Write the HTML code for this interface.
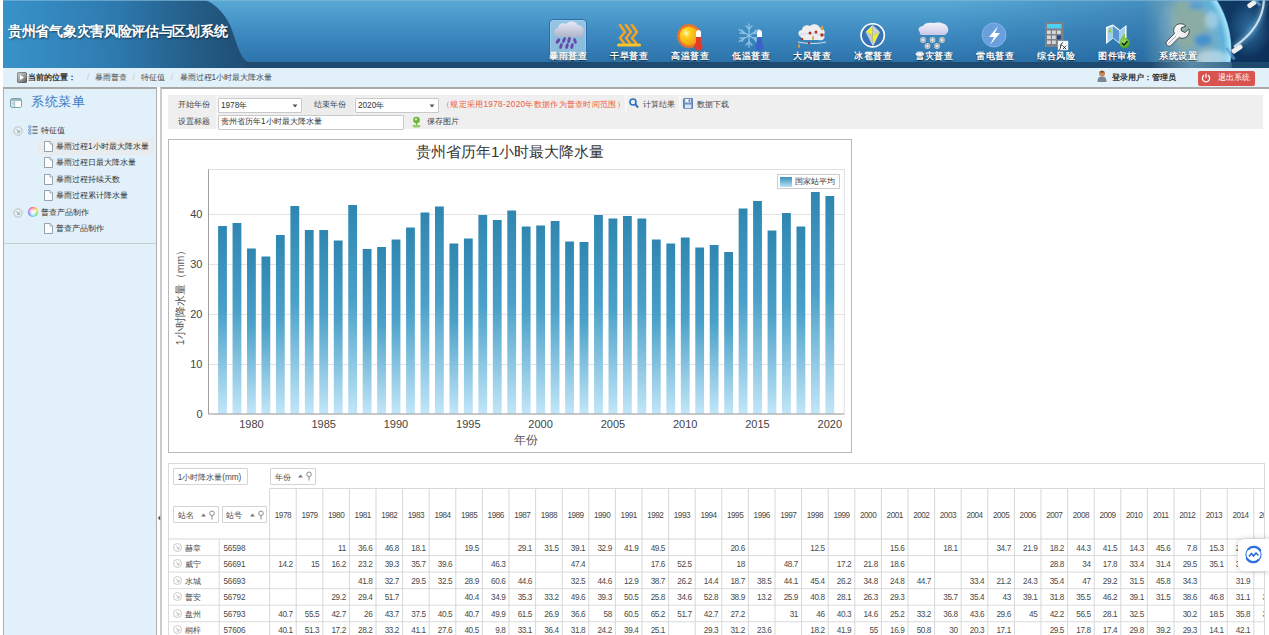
<!DOCTYPE html>
<html><head><meta charset="utf-8">
<style>
*{margin:0;padding:0;box-sizing:border-box}
html,body{width:1269px;height:635px;overflow:hidden}
body{position:relative;background:#fff;font-family:"Liberation Sans",sans-serif;color:#333}
.a{position:absolute}
#title{left:8px;top:21.5px;font-size:14px;letter-spacing:-0.3px;font-weight:bold;color:#fff;text-shadow:1px 1px 2px rgba(0,0,0,.55);white-space:nowrap;line-height:18px}
.nl{position:absolute;top:50px;width:51px;font-size:9px;letter-spacing:0.6px;text-indent:0.6px;font-weight:bold;color:#fff;text-shadow:0 1px 1.5px rgba(0,0,0,.75);white-space:nowrap;text-align:center;line-height:12px}
#bc{left:3px;top:68px;width:1266px;height:19px;background:#e2f0f9}
#side{left:3px;top:87px;width:154px;height:560px;background:#e2f0f9;border:1px solid #b0b0b0;border-top:2px solid #a9a9a9}
#main{left:160px;top:87px;width:1110px;height:560px;background:#fff;border-left:2px solid #cbcbcb;border-top:2px solid #a9a9a9}
.t9{font-size:8.2px;white-space:nowrap;line-height:12px}
.tr{color:#333}
.tl{color:#444}
.tv{color:#333}
.fi{position:absolute;left:44px;width:8.5px;height:10.5px;background:linear-gradient(135deg,#fff 0%,#e8f0f8 100%);border:1px solid #8a9aa8;border-radius:0 2px 0 0}
#tb{left:168px;top:95px;width:1095px;height:34px;background:#efefef}
.sel{position:absolute;background:#fff;border:1px solid #c9c9c9;border-radius:1px}
#chart{left:168px;top:139px;width:684px;height:314px;border:1px solid #b8b8b8;background:#fff}
.yl{position:absolute;left:0;width:33.5px;text-align:right;font-size:11px;color:#444;line-height:14px}
.xl{position:absolute;top:276.5px;width:40px;text-align:center;font-size:11px;color:#444;line-height:14px}
#tbl{left:168px;top:463px;width:1097px;height:200px;border:1px solid #d9d9d9;overflow:hidden;background:#fff}
.yc{position:absolute;font-size:8.2px;color:#4a4a4a;display:flex;align-items:center;justify-content:center;letter-spacing:-0.5px}
.dc{position:absolute;font-size:8.2px;color:#4a4a4a;line-height:16.5px;text-align:right;padding-right:3.6px;letter-spacing:-0.4px;white-space:nowrap}
.rn{position:absolute;font-size:8.2px;color:#4a4a4a;line-height:16.5px;white-space:nowrap}
.rn.sid{letter-spacing:-0.2px}
.pill{position:absolute;border:1px solid #d4d4d4;background:#fff;border-radius:1px}
.pb{position:absolute;border:1px solid #d0d0d0;background:#fff;font-size:9px;color:#555;white-space:nowrap;line-height:15px}
</style></head><body>
<svg class="a" style="left:0;top:0" width="1269" height="68">
<defs>
<linearGradient id="hl" x1="3" y1="0" x2="250" y2="0" gradientUnits="userSpaceOnUse">
 <stop offset="0" stop-color="#3893cb"/><stop offset="0.45" stop-color="#2e7aaf"/><stop offset="0.8" stop-color="#235b85"/><stop offset="1" stop-color="#1f4d72"/>
</linearGradient>
<linearGradient id="hr" x1="0" y1="0" x2="0" y2="1">
 <stop offset="0" stop-color="#58a9d5"/><stop offset="0.5" stop-color="#3f8cc2"/><stop offset="1" stop-color="#2c73ab"/>
</linearGradient>
<radialGradient id="earth" cx="0.5" cy="0.5" r="0.5">
 <stop offset="0" stop-color="#6c9cb4"/><stop offset="0.75" stop-color="#7dabbd"/><stop offset="0.92" stop-color="#5fb2dc"/><stop offset="0.985" stop-color="#a6e2f6"/><stop offset="1" stop-color="#5ab4e4"/>
</radialGradient>
<radialGradient id="earthfade" cx="1" cy="0.5" r="1">
 <stop offset="0.55" stop-color="#2f7ab3" stop-opacity="0"/><stop offset="1" stop-color="#2f7ab3" stop-opacity="1"/>
</radialGradient>
<linearGradient id="space" x1="0" y1="0" x2="1" y2="0">
 <stop offset="0" stop-color="#12406c"/><stop offset="1" stop-color="#0b2f58"/>
</linearGradient>
<linearGradient id="darkr" x1="0" y1="0" x2="1" y2="0"><stop offset="0" stop-color="#1f5e92" stop-opacity="0"/><stop offset="1" stop-color="#1f5e92" stop-opacity="0.55"/></linearGradient>
<linearGradient id="emg" x1="1142" y1="0" x2="1180" y2="0" gradientUnits="userSpaceOnUse"><stop offset="0" stop-color="#fff" stop-opacity="0"/><stop offset="1" stop-color="#fff" stop-opacity="1"/></linearGradient>
<mask id="emask" maskUnits="userSpaceOnUse" x="0" y="0" width="1269" height="68"><rect x="0" y="0" width="1269" height="68" fill="url(#emg)"/></mask>
<filter id="eblur" x="-20%" y="-20%" width="140%" height="140%"><feGaussianBlur stdDeviation="2"/></filter>
<radialGradient id="glow" cx="0.5" cy="0.5" r="0.5"><stop offset="0" stop-color="#4f9fd8" stop-opacity="0.55"/><stop offset="1" stop-color="#4f9fd8" stop-opacity="0"/></radialGradient>
<linearGradient id="stripe" x1="0" y1="0" x2="1" y2="0"><stop offset="0" stop-color="#8cc4dc" stop-opacity="0"/><stop offset="0.5" stop-color="#9ccbe0" stop-opacity="0.45"/><stop offset="1" stop-color="#8cc4dc" stop-opacity="0.2"/></linearGradient>
</defs>
<rect x="0" y="0" width="1269" height="68" fill="url(#hl)"/>
<path d="M206 0 C222 8 230 22 234 36 C238 48 242 60 248 62 L1269 62 L1269 0 Z" fill="url(#hr)"/>
<rect x="950" y="0" width="319" height="62" fill="url(#darkr)"/>
<rect x="1190" y="0" width="79" height="68" fill="url(#space)"/>
<g mask="url(#emask)">
<circle cx="1138" cy="50" r="93.5" fill="url(#earth)"/>
<g filter="url(#eblur)"><path d="M1172 4 C1186 -2 1204 6 1207 18 C1209 28 1201 33 1196 42 C1191 50 1181 52 1176 42 C1172 32 1168 15 1172 4 Z" fill="#8fae9c" opacity="0.75"/>
<ellipse cx="1203" cy="40" rx="9" ry="6" fill="#3d8dd2" opacity="0.85"/>
<ellipse cx="1196" cy="6" rx="8" ry="4" fill="#4a98d8" opacity="0.7"/>
<ellipse cx="1212" cy="20" rx="7" ry="9" fill="#d6ecf5" opacity="0.45"/>
<ellipse cx="1212" cy="58" rx="16" ry="8" fill="#e6f4fa" opacity="0.5"/>
<ellipse cx="1168" cy="25" rx="10" ry="18" fill="#a9c6cf" opacity="0.35"/>
</g></g>
<ellipse cx="1250" cy="28" rx="22" ry="30" fill="url(#glow)"/>
<path d="M1264 0 C1263 18 1253 34 1234 47" stroke="#9fe0ff" stroke-width="6" fill="none" opacity="0.35" filter="url(#eblur)"/>
<path d="M1264 0 C1263 18 1253 34 1234 47" stroke="#e6f8ff" stroke-width="2.2" fill="none" opacity="0.8"/>
<g transform="translate(1252,4) rotate(-35)"><rect x="-5" y="-2.5" width="10" height="5" rx="2" fill="#f0f0f0"/><rect x="4" y="-6" width="3" height="12" fill="#5c9fd4" opacity="0.8"/></g>
<g transform="translate(1237,49) rotate(-35)"><rect x="-6" y="-2.5" width="12" height="5" rx="2" fill="#eeeeee"/><rect x="-9.5" y="-7" width="3" height="14" fill="#5c9fd4" opacity="0.7"/></g>
<rect x="246" y="62" width="1023" height="6" fill="#1f4b70" opacity="0.92"/>
<rect x="1150" y="62" width="82" height="6" fill="url(#stripe)"/>
<rect x="0" y="0" width="1269" height="1" fill="#7fb5d6" opacity="0.7"/>
<rect x="0" y="0" width="3" height="68" fill="#fff"/>
</svg>
<div id="title" class="a">贵州省气象灾害风险评估与区划系统</div>

<div class="a" style="left:549px;top:19px;width:38px;height:42px;border:1px solid #2c6cab;border-radius:4px;background:rgba(200,232,246,0.58);box-shadow:inset 0 0 0 0.5px rgba(255,255,255,0.35)"></div>
<svg class="a" style="left:0;top:0" width="1269" height="68">
<defs>
<radialGradient id="sun" cx="0.35" cy="0.35" r="0.7"><stop offset="0" stop-color="#fffbd0"/><stop offset="0.3" stop-color="#ffd21c"/><stop offset="1" stop-color="#f39a14"/></radialGradient>
<linearGradient id="cld" x1="0" y1="0" x2="0" y2="1"><stop offset="0" stop-color="#e6e9f6"/><stop offset="1" stop-color="#aeb3c9"/></linearGradient>
<linearGradient id="cld2" x1="0" y1="0" x2="0" y2="1"><stop offset="0" stop-color="#f4f4fb"/><stop offset="1" stop-color="#c9c8e6"/></linearGradient>
<radialGradient id="gchk" cx="0.4" cy="0.35" r="0.7"><stop offset="0" stop-color="#9ee06a"/><stop offset="1" stop-color="#3a9a1c"/></radialGradient>
<linearGradient id="wr" x1="0" y1="0" x2="1" y2="1"><stop offset="0" stop-color="#ffffff"/><stop offset="0.6" stop-color="#eef0f3"/><stop offset="1" stop-color="#c4c9d0"/></linearGradient>
</defs>
<!-- rain -->
<g>
<path d="M556 35 C553 33 554 28 558 28 C558 24 563 22 566 24 C569 20 576 21 578 25 C582 25 585 29 583 33 C584 37 580 38 577 37 L560 37 C557 37 556 36 556 35 Z" fill="url(#cld)"/>
<g fill="#6a48aa"><ellipse cx="558" cy="41" rx="1.6" ry="3" transform="rotate(35 558 41)"/><ellipse cx="564" cy="40" rx="1.5" ry="3.2" transform="rotate(20 564 40)"/><ellipse cx="569" cy="40" rx="1.5" ry="3.2" transform="rotate(15 569 40)"/><ellipse cx="575" cy="41" rx="1.5" ry="3" transform="rotate(-20 575 41)"/><ellipse cx="561" cy="46" rx="1.5" ry="3" transform="rotate(20 561 46)"/><ellipse cx="567" cy="46" rx="1.5" ry="3" transform="rotate(15 567 46)"/><ellipse cx="572" cy="46" rx="1.5" ry="3" transform="rotate(15 572 46)"/></g>
</g>
<!-- drought -->
<g fill="none" stroke="#f7a21f" stroke-width="2.6" stroke-linejoin="round" stroke-linecap="round">
<path d="M620 25 L625 32 L620 38 L624 43"/><path d="M626 25 L631 32 L626 38 L630 43"/><path d="M632 25 L637 32 L632 38 L636 43"/>
</g>
<rect x="617" y="43.5" width="24" height="3" rx="1.5" fill="#f8c32b"/>
<!-- sun -->
<g>
<circle cx="689" cy="36" r="11.5" fill="#e8742a" stroke="#e8742a" stroke-width="1.5" stroke-dasharray="2 1.5"/>
<circle cx="689" cy="36" r="9.5" fill="url(#sun)"/>
<rect x="696" y="30" width="5" height="14" rx="2.5" fill="#fff"/>
<rect x="696" y="37" width="5" height="8" fill="#e03a2a"/>
<circle cx="698.5" cy="46.5" r="4" fill="#e03a2a"/>
</g>
<!-- snow -->
<g stroke="#8fc3e6" stroke-width="1.3" fill="none" stroke-linecap="round">
<path d="M749 24 L749 47 M739 29.5 L759 41.5 M739 41.5 L759 29.5"/>
<path d="M746 26 L749 29 L752 26 M746 45 L749 42 L752 45 M740 33 L744 33.5 L742 30 M758 38 L754 38 L756 41.5 M740 38 L744 38 L742 41.5 M758 33 L754 33.5 L756 30"/>
</g>
<g><rect x="757" y="30" width="5" height="14" rx="2.5" fill="#fff"/><rect x="757" y="37" width="5" height="8" fill="#3a62c8"/><circle cx="759.5" cy="46.5" r="4" fill="#3a62c8"/></g>
<!-- wind -->
<g>
<path d="M801 37 C797 35 798 30 802 30 C802 26 807 24 810 26 C813 23 819 24 820 28 C824 28 826 32 824 35 C826 39 822 41 819 40 L804 40 C802 40 801 39 801 37 Z" fill="#eeeeee"/>
<path d="M798 42 C808 44 818 44 826 42" stroke="#cfe4f4" stroke-width="1" fill="none"/>
<path d="M799 35 C806 33 814 33 822 35" stroke="#cdd7ee" stroke-width="1" fill="none"/>
<g fill="#b8342a"><circle cx="810" cy="33" r="1.5"/><circle cx="816" cy="32" r="1.5"/><circle cx="822" cy="35" r="1.8"/><circle cx="802" cy="39" r="1.3"/><circle cx="809" cy="43" r="1.2"/></g>
<g fill="#d4a440"><ellipse cx="822" cy="28" rx="1.3" ry="2.5"/><ellipse cx="813" cy="38" rx="1" ry="2"/><ellipse cx="799" cy="46" rx="1" ry="2"/></g>
</g>
<!-- hail -->
<g>
<circle cx="872.7" cy="35.3" r="11.6" fill="#3672b4" stroke="#ffffff" stroke-width="1.6"/>
<path d="M872.5 25.2 L866 32 L872.5 35.5 Z" fill="#f4ef1e"/>
<path d="M872.5 25.2 L879.5 32 L872.5 35.5 Z" fill="#cfd0d4"/>
<path d="M866 32 L872.5 35.5 L873 45.5 Z" fill="#c4c5ca"/>
<path d="M879.5 32 L872.5 35.5 L873 45.5 Z" fill="#f4ef1e"/>
<path d="M872.5 25.2 L879.5 32 L873 45.5 L866 32 Z" fill="none" stroke="#f2f2f2" stroke-width="0.6"/>
</g>
<!-- snow disaster -->
<g>
<path d="M920 32 C917 30 919 26 923 26 C924 23 929 22 933 23 C938 21.5 946 23 947.5 27 C949.5 30 947.5 34.5 944 35 L923 35 C920 35 919 34 920 32 Z" fill="url(#cld2)"/>
<circle cx="923" cy="40" r="2.9" fill="#dcdcdc" opacity="0.9"/><g stroke="#8f8f8f" stroke-width="0.7"><line x1="920.2" y1="40" x2="925.8" y2="40"/><line x1="921.6" y1="37.6" x2="924.4" y2="42.4"/><line x1="921.6" y1="42.4" x2="924.4" y2="37.6"/></g><circle cx="923" cy="40" r="1.1" fill="#fafafa"/><circle cx="932.5" cy="40" r="2.9" fill="#dcdcdc" opacity="0.9"/><g stroke="#8f8f8f" stroke-width="0.7"><line x1="929.7" y1="40" x2="935.3" y2="40"/><line x1="931.1" y1="37.6" x2="933.9" y2="42.4"/><line x1="931.1" y1="42.4" x2="933.9" y2="37.6"/></g><circle cx="932.5" cy="40" r="1.1" fill="#fafafa"/><circle cx="942" cy="40" r="2.9" fill="#dcdcdc" opacity="0.9"/><g stroke="#8f8f8f" stroke-width="0.7"><line x1="939.2" y1="40" x2="944.8" y2="40"/><line x1="940.6" y1="37.6" x2="943.4" y2="42.4"/><line x1="940.6" y1="42.4" x2="943.4" y2="37.6"/></g><circle cx="942" cy="40" r="1.1" fill="#fafafa"/><circle cx="927.5" cy="46" r="2.9" fill="#dcdcdc" opacity="0.9"/><g stroke="#8f8f8f" stroke-width="0.7"><line x1="924.7" y1="46" x2="930.3" y2="46"/><line x1="926.1" y1="43.6" x2="928.9" y2="48.4"/><line x1="926.1" y1="48.4" x2="928.9" y2="43.6"/></g><circle cx="927.5" cy="46" r="1.1" fill="#fafafa"/><circle cx="937" cy="46" r="2.9" fill="#dcdcdc" opacity="0.9"/><g stroke="#8f8f8f" stroke-width="0.7"><line x1="934.2" y1="46" x2="939.8" y2="46"/><line x1="935.6" y1="43.6" x2="938.4" y2="48.4"/><line x1="935.6" y1="48.4" x2="938.4" y2="43.6"/></g><circle cx="937" cy="46" r="1.1" fill="#fafafa"/>
</g>
<!-- thunder -->
<g>
<circle cx="994" cy="35" r="12" fill="#6a9fde" stroke="#8db8e8" stroke-width="0.8"/>
<path d="M998 26 L989 37 L994 37 L990 45 L1000 33 L995 33 Z" fill="#fff"/>
</g>
<!-- calculator -->
<g>
<rect x="1045" y="22" width="18.5" height="25" fill="#7d8087"/>
<rect x="1047" y="24" width="14.5" height="4.5" fill="#4fd0f2"/>
<g fill="#d6d8dc"><rect x="1047" y="30.5" width="3.8" height="3.5"/><rect x="1052" y="30.5" width="3.8" height="3.5"/><rect x="1057" y="30.5" width="3.8" height="3.5"/><rect x="1047" y="35.5" width="3.8" height="3.5"/><rect x="1052" y="35.5" width="3.8" height="3.5"/><rect x="1047" y="40.5" width="3.8" height="3.5"/><rect x="1052" y="40.5" width="3.8" height="3.5"/></g>
<rect x="1057" y="35.5" width="3.8" height="4" fill="#1e4690"/>
<rect x="1058" y="41" width="10" height="9" fill="#fff" stroke="#c9d4e4" stroke-width="0.5"/>
<path d="M1063.2 42.8 C1062 42.6 1061.4 43.3 1061.1 44.6 L1060.2 48.6 C1059.9 49.6 1059.4 49.8 1058.9 49.6" stroke="#222" stroke-width="0.9" fill="none"/><line x1="1059.9" y1="45.2" x2="1062.6" y2="45.2" stroke="#222" stroke-width="0.7"/><path d="M1062.8 45.6 L1066.2 49.2 M1066.2 45.6 L1062.8 49.2" stroke="#222" stroke-width="0.9"/>
</g>
<!-- map -->
<g>
<path d="M1106 27 L1113 24.5 L1120 30 L1126.5 25 L1126.5 40 L1120 44 L1113 38.5 L1106 44 Z" fill="#ffffff"/>
<path d="M1107.5 28 L1113 26 L1113 38 L1107.5 42 Z" fill="#9fd0ee"/>
<path d="M1113 26 L1119.5 31 L1119.5 42.5 L1113 38 Z" fill="#5a97d2"/>
<path d="M1119.5 31 L1125 27 L1125 39.5 L1119.5 42.5 Z" fill="#9fd0ee"/>
<path d="M1108 32 L1111 28 L1111 33 Z M1120 40 L1125 33 L1125 39 Z" fill="#8cc63f"/>
<circle cx="1124.8" cy="43" r="5.3" fill="url(#gchk)"/>
<path d="M1122 43 L1124 45 L1127.5 41.2" stroke="#111" stroke-width="1.3" fill="none"/>
</g>
<!-- wrench -->
<g>
<path d="M1186 26 C1183 23 1178 23 1175.5 26 C1173.5 28 1173 31 1174.5 33.5 L1167 41 C1165.5 42.5 1166 44.5 1167.5 45.5 C1168.8 46.5 1170.5 46.3 1171.5 45 L1179 37.5 C1181.5 39 1185 38.5 1187 36.5 C1189 34.5 1189.8 31.5 1188.8 29 L1185 32.5 L1181.5 31 L1181 28 Z" fill="url(#wr)" stroke="#3f3f3f" stroke-width="0.9"/><path d="M1168.5 43.5 L1176 36" stroke="#9aa0a8" stroke-width="0.8"/>
</g>
</svg>
<div class="nl" style="left:542.5px">暴雨普查</div>
<div class="nl" style="left:603.5px">干旱普查</div>
<div class="nl" style="left:664.5px">高温普查</div>
<div class="nl" style="left:725.5px">低温普查</div>
<div class="nl" style="left:786.5px">大风普查</div>
<div class="nl" style="left:847.5px">冰雹普查</div>
<div class="nl" style="left:908.5px">雪灾普查</div>
<div class="nl" style="left:969.5px">雷电普查</div>
<div class="nl" style="left:1030.5px">综合风险</div>
<div class="nl" style="left:1091.5px">图件审核</div>
<div class="nl" style="left:1152.5px">系统设置</div>

<div id="bc" class="a"></div>
<div class="a" style="left:16.5px;top:72px;width:10px;height:10.5px;border-radius:2.5px;background:linear-gradient(135deg,#d9d9d9 0%,#9a9a9a 55%,#4f4f4f 100%);box-shadow:inset 0 0 0 0.5px #555"></div>
<svg class="a" style="left:16px;top:72px" width="11" height="11"><path d="M4 3 L8 5.5 L4 8 Z" fill="#fff"/></svg>
<div class="a t9" style="left:27.5px;top:71.5px;font-weight:bold;color:#333;line-height:12px">当前的位置：</div>
<div class="a t9" style="left:87px;top:71.5px;color:#c8c8c8;line-height:12px">/</div>
<div class="a t9" style="left:95px;top:71.5px;color:#4a4a4a;line-height:12px">暴雨普查</div>
<div class="a t9" style="left:132.5px;top:71.5px;color:#c8c8c8;line-height:12px">/</div>
<div class="a t9" style="left:141px;top:71.5px;color:#4a4a4a;line-height:12px">特征值</div>
<div class="a t9" style="left:171px;top:71.5px;color:#c8c8c8;line-height:12px">/</div>
<div class="a t9" style="left:179.5px;top:71.5px;color:#4a4a4a;line-height:12px">暴雨过程1小时最大降水量</div>
<svg class="a" style="left:1097px;top:70px" width="10" height="13"><circle cx="5" cy="3.5" r="3" fill="#c98a5a"/><path d="M0.5 12 C0.5 7.5 2.5 6.5 5 6.5 C7.5 6.5 9.5 7.5 9.5 12 Z" fill="#7b8796"/><path d="M2.5 2.5 C3 0.5 7 0.5 7.5 2.5" fill="#6a4a2a"/></svg>
<div class="a t9" style="left:1112px;top:71.5px;font-weight:bold;color:#333;line-height:12px">登录用户：管理员</div>
<div class="a" style="left:1198px;top:71px;width:57px;height:15px;background:#d9534f;border-radius:2px"></div>
<svg class="a" style="left:1201px;top:73px" width="10" height="10"><path d="M3 2.3 A3.6 3.6 0 1 0 7 2.3" stroke="#fff" stroke-width="1.3" fill="none"/><line x1="5" y1="0.8" x2="5" y2="4.8" stroke="#fff" stroke-width="1.3"/></svg>
<div class="a t9" style="left:1218px;top:72px;color:#fff;line-height:12px">退出系统</div>

<div id="side" class="a"></div>
<svg class="a" style="left:9.5px;top:97.5px" width="12" height="10"><rect x="0.6" y="0.6" width="10.8" height="8.8" rx="1.5" fill="#e9f2f4" stroke="#6f9aa6" stroke-width="1"/><rect x="1" y="1" width="10" height="1.8" fill="#8fb4bd"/><rect x="5.5" y="3" width="5.5" height="6" fill="#fbfdfd"/><line x1="4.6" y1="3" x2="4.6" y2="9" stroke="#8fb0b8" stroke-width="0.7"/><path d="M3.8 4 L2.2 5 L3.8 6 M3.8 6.5 L2.2 7.5" stroke="#6f9aa6" stroke-width="0.6" fill="none"/></svg>
<div class="a" style="left:31px;top:93px;font-size:13px;letter-spacing:0.6px;color:#3a7cc4;white-space:nowrap;line-height:17px">系统菜单</div>
<svg class="a" style="left:12.5px;top:126px" width="10" height="10"><circle cx="5" cy="5" r="4.2" fill="none" stroke="#b9b9b9" stroke-width="0.9"/><path d="M3.3 3.3 L6.3 6.3 M6.3 4 L6.3 6.3 L4 6.3" stroke="#999" stroke-width="0.8" fill="none"/></svg>
<svg class="a" style="left:28px;top:125px" width="10" height="10"><g fill="none" stroke="#5a7fc0" stroke-width="0.8"><circle cx="1.8" cy="1.8" r="1.2"/><circle cx="1.8" cy="5" r="1.2"/><circle cx="1.8" cy="8.2" r="1.2"/></g><g stroke="#444" stroke-width="1"><line x1="4.5" y1="1.8" x2="9.5" y2="1.8"/><line x1="4.5" y1="5" x2="9.5" y2="5"/><line x1="4.5" y1="8.2" x2="9.5" y2="8.2"/></g></svg>
<div class="a t9 tr" style="left:41px;top:125.3px">特征值</div>
<div class="a" style="left:38px;top:139px;width:116px;height:15.5px;background:#e9ecee"></div>
<svg class="a" style="left:44px;top:141.0px" width="9" height="11"><path d="M0.5 0.5 L6 0.5 L8.5 3 L8.5 10.5 L0.5 10.5 Z" fill="#fbfcfd" stroke="#8d99a3" stroke-width="0.9"/><path d="M6 0.5 L6 3 L8.5 3" fill="#e3e8ec" stroke="#8d99a3" stroke-width="0.7"/></svg><div class="a t9 tr" style="left:56px;top:141.3px">暴雨过程1小时最大降水量</div>
<svg class="a" style="left:44px;top:157.0px" width="9" height="11"><path d="M0.5 0.5 L6 0.5 L8.5 3 L8.5 10.5 L0.5 10.5 Z" fill="#fbfcfd" stroke="#8d99a3" stroke-width="0.9"/><path d="M6 0.5 L6 3 L8.5 3" fill="#e3e8ec" stroke="#8d99a3" stroke-width="0.7"/></svg><div class="a t9 tr" style="left:56px;top:157.3px">暴雨过程日最大降水量</div>
<svg class="a" style="left:44px;top:173.5px" width="9" height="11"><path d="M0.5 0.5 L6 0.5 L8.5 3 L8.5 10.5 L0.5 10.5 Z" fill="#fbfcfd" stroke="#8d99a3" stroke-width="0.9"/><path d="M6 0.5 L6 3 L8.5 3" fill="#e3e8ec" stroke="#8d99a3" stroke-width="0.7"/></svg><div class="a t9 tr" style="left:56px;top:173.8px">暴雨过程持续天数</div>
<svg class="a" style="left:44px;top:190.0px" width="9" height="11"><path d="M0.5 0.5 L6 0.5 L8.5 3 L8.5 10.5 L0.5 10.5 Z" fill="#fbfcfd" stroke="#8d99a3" stroke-width="0.9"/><path d="M6 0.5 L6 3 L8.5 3" fill="#e3e8ec" stroke="#8d99a3" stroke-width="0.7"/></svg><div class="a t9 tr" style="left:56px;top:190.3px">暴雨过程累计降水量</div>
<svg class="a" style="left:12.5px;top:208px" width="10" height="10"><circle cx="5" cy="5" r="4.2" fill="none" stroke="#b9b9b9" stroke-width="0.9"/><path d="M3.3 3.3 L6.3 6.3 M6.3 4 L6.3 6.3 L4 6.3" stroke="#999" stroke-width="0.8" fill="none"/></svg>
<div class="a" style="left:28px;top:207px;width:10px;height:10px;border-radius:50%;background:conic-gradient(#ff3b3b,#ffd400,#3bd13b,#33c8ff,#3b5bff,#d13bd1,#ff3b3b)"></div>
<div class="a" style="left:28px;top:207px;width:10px;height:10px;border-radius:50%;background:radial-gradient(circle,#fff 0%,rgba(255,255,255,.85) 30%,rgba(255,255,255,0.1) 75%)"></div>
<div class="a t9 tr" style="left:41px;top:207.3px">普查产品制作</div>
<svg class="a" style="left:44px;top:223.0px" width="9" height="11"><path d="M0.5 0.5 L6 0.5 L8.5 3 L8.5 10.5 L0.5 10.5 Z" fill="#fbfcfd" stroke="#8d99a3" stroke-width="0.9"/><path d="M6 0.5 L6 3 L8.5 3" fill="#e3e8ec" stroke="#8d99a3" stroke-width="0.7"/></svg><div class="a t9 tr" style="left:56px;top:223.3px">普查产品制作</div>
<div class="a" style="left:4px;top:243px;width:152px;height:1px;background:#c6cdd2"></div>

<div id="main" class="a"></div>
<svg class="a" style="left:157px;top:515px" width="4" height="6"><path d="M3.2 0.5 L0.8 3 L3.2 5.5 Z" fill="#555"/></svg>

<div id="tb" class="a"></div>
<div class="a" style="left:216px;top:95px;width:2px;height:34px;background:#f7f7f7"></div>
<div class="a t9 tl" style="left:177.5px;top:98.5px">开始年份</div>
<div class="a t9 tl" style="left:177.5px;top:115.5px">设置标题</div>
<div class="sel" style="left:218px;top:97.5px;width:84px;height:15px"></div>
<div class="a t9 tv" style="left:221px;top:99.5px">1978年</div>
<svg class="a" style="left:292px;top:103.5px" width="6" height="4"><path d="M0.5 0.5 L5.5 0.5 L3 3.5 Z" fill="#555"/></svg>
<div class="a" style="left:303px;top:95px;width:50px;height:34px;background:#ececec"></div>
<div class="a t9 tl" style="left:314px;top:98.5px">结束年份</div>
<div class="sel" style="left:355px;top:97.5px;width:84px;height:15px"></div>
<div class="a t9 tv" style="left:358px;top:99.5px">2020年</div>
<svg class="a" style="left:429px;top:103.5px" width="6" height="4"><path d="M0.5 0.5 L5.5 0.5 L3 3.5 Z" fill="#555"/></svg>
<div class="sel" style="left:218px;top:114.5px;width:186px;height:15px"></div>
<div class="a t9 tv" style="left:221px;top:116.3px">贵州省历年1小时最大降水量</div>
<div class="a t9" style="left:442px;top:98.5px;color:#ef5a43;line-height:12px;letter-spacing:0.3px">（规定采用1978-2020年数据作为普查时间范围）</div>
<div class="a" style="left:625px;top:95px;width:1.5px;height:17px;background:#f8f8f8"></div>
<div class="a" style="left:679px;top:95px;width:1.5px;height:17px;background:#f8f8f8"></div>
<svg class="a" style="left:629px;top:98px" width="10" height="11"><circle cx="4" cy="4" r="3" fill="none" stroke="#2d6fc0" stroke-width="1.6"/><line x1="6.2" y1="6.2" x2="9" y2="9.5" stroke="#2d6fc0" stroke-width="2"/></svg>
<div class="a t9 tl" style="left:642.5px;top:98.5px">计算结果</div>
<svg class="a" style="left:683px;top:97.5px" width="10" height="11"><rect x="0.5" y="0.5" width="9.5" height="10" rx="1" fill="#6f93c4" stroke="#4a6fa5" stroke-width="0.8"/><rect x="2.2" y="0.9" width="5.5" height="3.6" fill="#f2f5fa"/><rect x="5.6" y="1.4" width="1.3" height="2.4" fill="#4a6fa5"/><rect x="2" y="6.5" width="6.3" height="3.8" fill="#d9e4f2"/></svg>
<div class="a t9 tl" style="left:697px;top:98.5px">数据下载</div>
<svg class="a" style="left:412px;top:115.5px" width="9" height="12"><circle cx="4.5" cy="4" r="3.3" fill="#6ab23a"/><circle cx="4" cy="3.3" r="1.2" fill="#c9f0a0"/><path d="M4.5 7 L4.5 9" stroke="#5a9a30" stroke-width="1"/><ellipse cx="4.5" cy="10" rx="4" ry="1.5" fill="#9acd6a"/></svg>
<div class="a t9 tl" style="left:427px;top:115.5px">保存图片</div>

<div id="chart" class="a">
<svg width="684" height="313" style="position:absolute;left:0;top:0">
<defs><linearGradient id="bg" x1="0" y1="0" x2="0" y2="1"><stop offset="0" stop-color="#2f86b0"/><stop offset="0.45" stop-color="#4aa0c8"/><stop offset="1" stop-color="#c2e6f8"/></linearGradient><linearGradient id="lg" x1="0" y1="0" x2="0" y2="1"><stop offset="0" stop-color="#3a8fbb"/><stop offset="1" stop-color="#b8e2f6"/></linearGradient></defs>
<rect x="39.5" y="29.5" width="635.8" height="244.5" fill="none" stroke="#e0e0e0" stroke-width="1"/>
<line x1="39.5" y1="224.5" x2="675.3" y2="224.5" stroke="#e3e3e3" stroke-width="1"/>
<line x1="39.5" y1="174.5" x2="675.3" y2="174.5" stroke="#e3e3e3" stroke-width="1"/>
<line x1="39.5" y1="124.5" x2="675.3" y2="124.5" stroke="#e3e3e3" stroke-width="1"/>
<line x1="39.5" y1="74.5" x2="675.3" y2="74.5" stroke="#e3e3e3" stroke-width="1"/>
<rect x="49.10" y="86.00" width="8.8" height="188.00" fill="url(#bg)"/>
<rect x="63.56" y="83.00" width="8.8" height="191.00" fill="url(#bg)"/>
<rect x="78.02" y="108.50" width="8.8" height="165.50" fill="url(#bg)"/>
<rect x="92.48" y="116.50" width="8.8" height="157.50" fill="url(#bg)"/>
<rect x="106.94" y="95.00" width="8.8" height="179.00" fill="url(#bg)"/>
<rect x="121.40" y="66.00" width="8.8" height="208.00" fill="url(#bg)"/>
<rect x="135.86" y="90.00" width="8.8" height="184.00" fill="url(#bg)"/>
<rect x="150.32" y="90.00" width="8.8" height="184.00" fill="url(#bg)"/>
<rect x="164.78" y="100.50" width="8.8" height="173.50" fill="url(#bg)"/>
<rect x="179.24" y="65.00" width="8.8" height="209.00" fill="url(#bg)"/>
<rect x="193.70" y="109.00" width="8.8" height="165.00" fill="url(#bg)"/>
<rect x="208.16" y="107.00" width="8.8" height="167.00" fill="url(#bg)"/>
<rect x="222.62" y="99.50" width="8.8" height="174.50" fill="url(#bg)"/>
<rect x="237.08" y="87.50" width="8.8" height="186.50" fill="url(#bg)"/>
<rect x="251.54" y="72.50" width="8.8" height="201.50" fill="url(#bg)"/>
<rect x="266.00" y="66.50" width="8.8" height="207.50" fill="url(#bg)"/>
<rect x="280.46" y="103.50" width="8.8" height="170.50" fill="url(#bg)"/>
<rect x="294.92" y="98.50" width="8.8" height="175.50" fill="url(#bg)"/>
<rect x="309.38" y="75.00" width="8.8" height="199.00" fill="url(#bg)"/>
<rect x="323.84" y="80.00" width="8.8" height="194.00" fill="url(#bg)"/>
<rect x="338.30" y="70.50" width="8.8" height="203.50" fill="url(#bg)"/>
<rect x="352.76" y="86.50" width="8.8" height="187.50" fill="url(#bg)"/>
<rect x="367.22" y="85.50" width="8.8" height="188.50" fill="url(#bg)"/>
<rect x="381.68" y="81.00" width="8.8" height="193.00" fill="url(#bg)"/>
<rect x="396.14" y="101.50" width="8.8" height="172.50" fill="url(#bg)"/>
<rect x="410.60" y="102.00" width="8.8" height="172.00" fill="url(#bg)"/>
<rect x="425.06" y="75.00" width="8.8" height="199.00" fill="url(#bg)"/>
<rect x="439.52" y="78.50" width="8.8" height="195.50" fill="url(#bg)"/>
<rect x="453.98" y="76.00" width="8.8" height="198.00" fill="url(#bg)"/>
<rect x="468.44" y="78.50" width="8.8" height="195.50" fill="url(#bg)"/>
<rect x="482.90" y="99.50" width="8.8" height="174.50" fill="url(#bg)"/>
<rect x="497.36" y="103.50" width="8.8" height="170.50" fill="url(#bg)"/>
<rect x="511.82" y="97.50" width="8.8" height="176.50" fill="url(#bg)"/>
<rect x="526.28" y="107.50" width="8.8" height="166.50" fill="url(#bg)"/>
<rect x="540.74" y="105.00" width="8.8" height="169.00" fill="url(#bg)"/>
<rect x="555.20" y="112.00" width="8.8" height="162.00" fill="url(#bg)"/>
<rect x="569.66" y="68.50" width="8.8" height="205.50" fill="url(#bg)"/>
<rect x="584.12" y="61.00" width="8.8" height="213.00" fill="url(#bg)"/>
<rect x="598.58" y="90.50" width="8.8" height="183.50" fill="url(#bg)"/>
<rect x="613.04" y="73.00" width="8.8" height="201.00" fill="url(#bg)"/>
<rect x="627.50" y="86.50" width="8.8" height="187.50" fill="url(#bg)"/>
<rect x="641.96" y="52.00" width="8.8" height="222.00" fill="url(#bg)"/>
<rect x="656.42" y="56.00" width="8.8" height="218.00" fill="url(#bg)"/>
<line x1="39.5" y1="29.5" x2="39.5" y2="274.0" stroke="#a0a0a0" stroke-width="1"/>
<line x1="39.5" y1="274.0" x2="675.3" y2="274.0" stroke="#a0a0a0" stroke-width="1"/>
</svg>
<div class="yl" style="top:267.0px">0</div>
<div class="yl" style="top:217.0px">10</div>
<div class="yl" style="top:167.0px">20</div>
<div class="yl" style="top:117.0px">30</div>
<div class="yl" style="top:67.0px">40</div>
<div class="xl" style="left:62.4px">1980</div>
<div class="xl" style="left:134.7px">1985</div>
<div class="xl" style="left:207.0px">1990</div>
<div class="xl" style="left:279.3px">1995</div>
<div class="xl" style="left:351.6px">2000</div>
<div class="xl" style="left:423.9px">2005</div>
<div class="xl" style="left:496.2px">2010</div>
<div class="xl" style="left:568.5px">2015</div>
<div class="xl" style="left:640.8px">2020</div>
<div class="a" style="left:247px;top:1.5px;font-size:15px;color:#333;white-space:nowrap;line-height:20px">贵州省历年1小时最大降水量</div>
<div class="a" style="left:607.5px;top:34px;width:63.5px;height:15px;border:1px solid #ccc;background:#fff"></div>
<div class="a" style="left:610.5px;top:37px;width:12px;height:10px;background:linear-gradient(#3a8fbb,#b8e2f6)"></div>
<div class="a t9" style="left:625.5px;top:36px;color:#333">国家站平均</div>
<div class="a" style="left:-49.5px;top:147.5px;width:120px;text-align:center;font-size:10.5px;color:#555;white-space:nowrap;transform:rotate(-90deg);line-height:14px">1小时降水量（mm）</div>
<div class="a" style="left:345px;top:293px;font-size:11.5px;color:#555;white-space:nowrap;line-height:15px">年份</div>
</div>
<div id="tbl" class="a">
<svg class="a" style="left:0;top:0" width="1095" height="200"><rect x="100.60" y="24.00" width="1200" height="1" fill="#d8d8d8"/><rect x="0" y="74.50" width="1200" height="1" fill="#d8d8d8"/><rect x="0" y="91.05" width="1200" height="1" fill="#dcdcdc"/><rect x="0" y="107.60" width="1200" height="1" fill="#dcdcdc"/><rect x="0" y="124.15" width="1200" height="1" fill="#dcdcdc"/><rect x="0" y="140.70" width="1200" height="1" fill="#dcdcdc"/><rect x="0" y="157.25" width="1200" height="1" fill="#dcdcdc"/><rect x="0" y="173.80" width="1200" height="1" fill="#dcdcdc"/><rect x="49.70" y="75.00" width="1" height="200" fill="#dcdcdc"/><rect x="100.10" y="24.50" width="1" height="200" fill="#d8d8d8"/><rect x="126.70" y="24.50" width="1" height="200" fill="#d8d8d8"/><rect x="153.30" y="24.50" width="1" height="200" fill="#d8d8d8"/><rect x="179.90" y="24.50" width="1" height="200" fill="#d8d8d8"/><rect x="206.50" y="24.50" width="1" height="200" fill="#d8d8d8"/><rect x="233.10" y="24.50" width="1" height="200" fill="#d8d8d8"/><rect x="259.70" y="24.50" width="1" height="200" fill="#d8d8d8"/><rect x="286.30" y="24.50" width="1" height="200" fill="#d8d8d8"/><rect x="312.90" y="24.50" width="1" height="200" fill="#d8d8d8"/><rect x="339.50" y="24.50" width="1" height="200" fill="#d8d8d8"/><rect x="366.10" y="24.50" width="1" height="200" fill="#d8d8d8"/><rect x="392.70" y="24.50" width="1" height="200" fill="#d8d8d8"/><rect x="419.30" y="24.50" width="1" height="200" fill="#d8d8d8"/><rect x="445.90" y="24.50" width="1" height="200" fill="#d8d8d8"/><rect x="472.50" y="24.50" width="1" height="200" fill="#d8d8d8"/><rect x="499.10" y="24.50" width="1" height="200" fill="#d8d8d8"/><rect x="525.70" y="24.50" width="1" height="200" fill="#d8d8d8"/><rect x="552.30" y="24.50" width="1" height="200" fill="#d8d8d8"/><rect x="578.90" y="24.50" width="1" height="200" fill="#d8d8d8"/><rect x="605.50" y="24.50" width="1" height="200" fill="#d8d8d8"/><rect x="632.10" y="24.50" width="1" height="200" fill="#d8d8d8"/><rect x="658.70" y="24.50" width="1" height="200" fill="#d8d8d8"/><rect x="685.30" y="24.50" width="1" height="200" fill="#d8d8d8"/><rect x="711.90" y="24.50" width="1" height="200" fill="#d8d8d8"/><rect x="738.50" y="24.50" width="1" height="200" fill="#d8d8d8"/><rect x="765.10" y="24.50" width="1" height="200" fill="#d8d8d8"/><rect x="791.70" y="24.50" width="1" height="200" fill="#d8d8d8"/><rect x="818.30" y="24.50" width="1" height="200" fill="#d8d8d8"/><rect x="844.90" y="24.50" width="1" height="200" fill="#d8d8d8"/><rect x="871.50" y="24.50" width="1" height="200" fill="#d8d8d8"/><rect x="898.10" y="24.50" width="1" height="200" fill="#d8d8d8"/><rect x="924.70" y="24.50" width="1" height="200" fill="#d8d8d8"/><rect x="951.30" y="24.50" width="1" height="200" fill="#d8d8d8"/><rect x="977.90" y="24.50" width="1" height="200" fill="#d8d8d8"/><rect x="1004.50" y="24.50" width="1" height="200" fill="#d8d8d8"/><rect x="1031.10" y="24.50" width="1" height="200" fill="#d8d8d8"/><rect x="1057.70" y="24.50" width="1" height="200" fill="#d8d8d8"/><rect x="1084.30" y="24.50" width="1" height="200" fill="#d8d8d8"/><rect x="1110.90" y="24.50" width="1" height="200" fill="#d8d8d8"/></svg>
<div class="yc" style="left:100.6px;top:25.8px;width:26.6px;height:50.5px">1978</div>
<div class="yc" style="left:127.2px;top:25.8px;width:26.6px;height:50.5px">1979</div>
<div class="yc" style="left:153.8px;top:25.8px;width:26.6px;height:50.5px">1980</div>
<div class="yc" style="left:180.4px;top:25.8px;width:26.6px;height:50.5px">1981</div>
<div class="yc" style="left:207.0px;top:25.8px;width:26.6px;height:50.5px">1982</div>
<div class="yc" style="left:233.6px;top:25.8px;width:26.6px;height:50.5px">1983</div>
<div class="yc" style="left:260.2px;top:25.8px;width:26.6px;height:50.5px">1984</div>
<div class="yc" style="left:286.8px;top:25.8px;width:26.6px;height:50.5px">1985</div>
<div class="yc" style="left:313.4px;top:25.8px;width:26.6px;height:50.5px">1986</div>
<div class="yc" style="left:340.0px;top:25.8px;width:26.6px;height:50.5px">1987</div>
<div class="yc" style="left:366.6px;top:25.8px;width:26.6px;height:50.5px">1988</div>
<div class="yc" style="left:393.2px;top:25.8px;width:26.6px;height:50.5px">1989</div>
<div class="yc" style="left:419.8px;top:25.8px;width:26.6px;height:50.5px">1990</div>
<div class="yc" style="left:446.4px;top:25.8px;width:26.6px;height:50.5px">1991</div>
<div class="yc" style="left:473.0px;top:25.8px;width:26.6px;height:50.5px">1992</div>
<div class="yc" style="left:499.6px;top:25.8px;width:26.6px;height:50.5px">1993</div>
<div class="yc" style="left:526.2px;top:25.8px;width:26.6px;height:50.5px">1994</div>
<div class="yc" style="left:552.8px;top:25.8px;width:26.6px;height:50.5px">1995</div>
<div class="yc" style="left:579.4px;top:25.8px;width:26.6px;height:50.5px">1996</div>
<div class="yc" style="left:606.0px;top:25.8px;width:26.6px;height:50.5px">1997</div>
<div class="yc" style="left:632.6px;top:25.8px;width:26.6px;height:50.5px">1998</div>
<div class="yc" style="left:659.2px;top:25.8px;width:26.6px;height:50.5px">1999</div>
<div class="yc" style="left:685.8px;top:25.8px;width:26.6px;height:50.5px">2000</div>
<div class="yc" style="left:712.4px;top:25.8px;width:26.6px;height:50.5px">2001</div>
<div class="yc" style="left:739.0px;top:25.8px;width:26.6px;height:50.5px">2002</div>
<div class="yc" style="left:765.6px;top:25.8px;width:26.6px;height:50.5px">2003</div>
<div class="yc" style="left:792.2px;top:25.8px;width:26.6px;height:50.5px">2004</div>
<div class="yc" style="left:818.8px;top:25.8px;width:26.6px;height:50.5px">2005</div>
<div class="yc" style="left:845.4px;top:25.8px;width:26.6px;height:50.5px">2006</div>
<div class="yc" style="left:872.0px;top:25.8px;width:26.6px;height:50.5px">2007</div>
<div class="yc" style="left:898.6px;top:25.8px;width:26.6px;height:50.5px">2008</div>
<div class="yc" style="left:925.2px;top:25.8px;width:26.6px;height:50.5px">2009</div>
<div class="yc" style="left:951.8px;top:25.8px;width:26.6px;height:50.5px">2010</div>
<div class="yc" style="left:978.4px;top:25.8px;width:26.6px;height:50.5px">2011</div>
<div class="yc" style="left:1005.0px;top:25.8px;width:26.6px;height:50.5px">2012</div>
<div class="yc" style="left:1031.6px;top:25.8px;width:26.6px;height:50.5px">2013</div>
<div class="yc" style="left:1058.2px;top:25.8px;width:26.6px;height:50.5px">2014</div>
<div class="yc" style="left:1084.8px;top:25.8px;width:26.6px;height:50.5px">2015</div>
<svg class="a" style="left:3.9px;top:78.5px" width="9" height="9"><circle cx="4.5" cy="4.5" r="4" fill="none" stroke="#bdbdbd" stroke-width="0.8"/><path d="M3 3 L6 6 M6 3.8 L6 6 L3.8 6" stroke="#aaa" stroke-width="0.7" fill="none"/></svg>
<div class="rn" style="left:16.0px;top:76.7px">赫章</div>
<div class="rn sid" style="left:54.5px;top:76.7px">56598</div>
<div class="dc" style="left:153.8px;top:76.7px;width:26.6px">11</div>
<div class="dc" style="left:180.4px;top:76.7px;width:26.6px">36.6</div>
<div class="dc" style="left:207.0px;top:76.7px;width:26.6px">46.8</div>
<div class="dc" style="left:233.6px;top:76.7px;width:26.6px">18.1</div>
<div class="dc" style="left:286.8px;top:76.7px;width:26.6px">19.5</div>
<div class="dc" style="left:340.0px;top:76.7px;width:26.6px">29.1</div>
<div class="dc" style="left:366.6px;top:76.7px;width:26.6px">31.5</div>
<div class="dc" style="left:393.2px;top:76.7px;width:26.6px">39.1</div>
<div class="dc" style="left:419.8px;top:76.7px;width:26.6px">32.9</div>
<div class="dc" style="left:446.4px;top:76.7px;width:26.6px">41.9</div>
<div class="dc" style="left:473.0px;top:76.7px;width:26.6px">49.5</div>
<div class="dc" style="left:552.8px;top:76.7px;width:26.6px">20.6</div>
<div class="dc" style="left:632.6px;top:76.7px;width:26.6px">12.5</div>
<div class="dc" style="left:712.4px;top:76.7px;width:26.6px">15.6</div>
<div class="dc" style="left:765.6px;top:76.7px;width:26.6px">18.1</div>
<div class="dc" style="left:818.8px;top:76.7px;width:26.6px">34.7</div>
<div class="dc" style="left:845.4px;top:76.7px;width:26.6px">21.9</div>
<div class="dc" style="left:872.0px;top:76.7px;width:26.6px">18.2</div>
<div class="dc" style="left:898.6px;top:76.7px;width:26.6px">44.3</div>
<div class="dc" style="left:925.2px;top:76.7px;width:26.6px">41.5</div>
<div class="dc" style="left:951.8px;top:76.7px;width:26.6px">14.3</div>
<div class="dc" style="left:978.4px;top:76.7px;width:26.6px">45.6</div>
<div class="dc" style="left:1005.0px;top:76.7px;width:26.6px">7.8</div>
<div class="dc" style="left:1031.6px;top:76.7px;width:26.6px">15.3</div>
<div class="dc" style="left:1058.2px;top:76.7px;width:26.6px">22.9</div>
<svg class="a" style="left:3.9px;top:95.0px" width="9" height="9"><circle cx="4.5" cy="4.5" r="4" fill="none" stroke="#bdbdbd" stroke-width="0.8"/><path d="M3 3 L6 6 M6 3.8 L6 6 L3.8 6" stroke="#aaa" stroke-width="0.7" fill="none"/></svg>
<div class="rn" style="left:16.0px;top:93.2px">威宁</div>
<div class="rn sid" style="left:54.5px;top:93.2px">56691</div>
<div class="dc" style="left:100.6px;top:93.2px;width:26.6px">14.2</div>
<div class="dc" style="left:127.2px;top:93.2px;width:26.6px">15</div>
<div class="dc" style="left:153.8px;top:93.2px;width:26.6px">16.2</div>
<div class="dc" style="left:180.4px;top:93.2px;width:26.6px">23.2</div>
<div class="dc" style="left:207.0px;top:93.2px;width:26.6px">39.3</div>
<div class="dc" style="left:233.6px;top:93.2px;width:26.6px">35.7</div>
<div class="dc" style="left:260.2px;top:93.2px;width:26.6px">39.6</div>
<div class="dc" style="left:313.4px;top:93.2px;width:26.6px">46.3</div>
<div class="dc" style="left:393.2px;top:93.2px;width:26.6px">47.4</div>
<div class="dc" style="left:473.0px;top:93.2px;width:26.6px">17.6</div>
<div class="dc" style="left:499.6px;top:93.2px;width:26.6px">52.5</div>
<div class="dc" style="left:552.8px;top:93.2px;width:26.6px">18</div>
<div class="dc" style="left:606.0px;top:93.2px;width:26.6px">48.7</div>
<div class="dc" style="left:659.2px;top:93.2px;width:26.6px">17.2</div>
<div class="dc" style="left:685.8px;top:93.2px;width:26.6px">21.8</div>
<div class="dc" style="left:712.4px;top:93.2px;width:26.6px">18.6</div>
<div class="dc" style="left:872.0px;top:93.2px;width:26.6px">28.8</div>
<div class="dc" style="left:898.6px;top:93.2px;width:26.6px">34</div>
<div class="dc" style="left:925.2px;top:93.2px;width:26.6px">17.8</div>
<div class="dc" style="left:951.8px;top:93.2px;width:26.6px">33.4</div>
<div class="dc" style="left:978.4px;top:93.2px;width:26.6px">31.4</div>
<div class="dc" style="left:1005.0px;top:93.2px;width:26.6px">29.5</div>
<div class="dc" style="left:1031.6px;top:93.2px;width:26.6px">35.1</div>
<div class="dc" style="left:1058.2px;top:93.2px;width:26.6px">33.6</div>
<svg class="a" style="left:3.9px;top:111.6px" width="9" height="9"><circle cx="4.5" cy="4.5" r="4" fill="none" stroke="#bdbdbd" stroke-width="0.8"/><path d="M3 3 L6 6 M6 3.8 L6 6 L3.8 6" stroke="#aaa" stroke-width="0.7" fill="none"/></svg>
<div class="rn" style="left:16.0px;top:109.8px">水城</div>
<div class="rn sid" style="left:54.5px;top:109.8px">56693</div>
<div class="dc" style="left:180.4px;top:109.8px;width:26.6px">41.8</div>
<div class="dc" style="left:207.0px;top:109.8px;width:26.6px">32.7</div>
<div class="dc" style="left:233.6px;top:109.8px;width:26.6px">29.5</div>
<div class="dc" style="left:260.2px;top:109.8px;width:26.6px">32.5</div>
<div class="dc" style="left:286.8px;top:109.8px;width:26.6px">28.9</div>
<div class="dc" style="left:313.4px;top:109.8px;width:26.6px">60.6</div>
<div class="dc" style="left:340.0px;top:109.8px;width:26.6px">44.6</div>
<div class="dc" style="left:393.2px;top:109.8px;width:26.6px">32.5</div>
<div class="dc" style="left:419.8px;top:109.8px;width:26.6px">44.6</div>
<div class="dc" style="left:446.4px;top:109.8px;width:26.6px">12.9</div>
<div class="dc" style="left:473.0px;top:109.8px;width:26.6px">38.7</div>
<div class="dc" style="left:499.6px;top:109.8px;width:26.6px">26.2</div>
<div class="dc" style="left:526.2px;top:109.8px;width:26.6px">14.4</div>
<div class="dc" style="left:552.8px;top:109.8px;width:26.6px">18.7</div>
<div class="dc" style="left:579.4px;top:109.8px;width:26.6px">38.5</div>
<div class="dc" style="left:606.0px;top:109.8px;width:26.6px">44.1</div>
<div class="dc" style="left:632.6px;top:109.8px;width:26.6px">45.4</div>
<div class="dc" style="left:659.2px;top:109.8px;width:26.6px">26.2</div>
<div class="dc" style="left:685.8px;top:109.8px;width:26.6px">34.8</div>
<div class="dc" style="left:712.4px;top:109.8px;width:26.6px">24.8</div>
<div class="dc" style="left:739.0px;top:109.8px;width:26.6px">44.7</div>
<div class="dc" style="left:792.2px;top:109.8px;width:26.6px">33.4</div>
<div class="dc" style="left:818.8px;top:109.8px;width:26.6px">21.2</div>
<div class="dc" style="left:845.4px;top:109.8px;width:26.6px">24.3</div>
<div class="dc" style="left:872.0px;top:109.8px;width:26.6px">35.4</div>
<div class="dc" style="left:898.6px;top:109.8px;width:26.6px">47</div>
<div class="dc" style="left:925.2px;top:109.8px;width:26.6px">29.2</div>
<div class="dc" style="left:951.8px;top:109.8px;width:26.6px">31.5</div>
<div class="dc" style="left:978.4px;top:109.8px;width:26.6px">45.8</div>
<div class="dc" style="left:1005.0px;top:109.8px;width:26.6px">34.3</div>
<div class="dc" style="left:1058.2px;top:109.8px;width:26.6px">31.9</div>
<svg class="a" style="left:3.9px;top:128.1px" width="9" height="9"><circle cx="4.5" cy="4.5" r="4" fill="none" stroke="#bdbdbd" stroke-width="0.8"/><path d="M3 3 L6 6 M6 3.8 L6 6 L3.8 6" stroke="#aaa" stroke-width="0.7" fill="none"/></svg>
<div class="rn" style="left:16.0px;top:126.3px">普安</div>
<div class="rn sid" style="left:54.5px;top:126.3px">56792</div>
<div class="dc" style="left:153.8px;top:126.3px;width:26.6px">29.2</div>
<div class="dc" style="left:180.4px;top:126.3px;width:26.6px">29.4</div>
<div class="dc" style="left:207.0px;top:126.3px;width:26.6px">51.7</div>
<div class="dc" style="left:286.8px;top:126.3px;width:26.6px">40.4</div>
<div class="dc" style="left:313.4px;top:126.3px;width:26.6px">34.9</div>
<div class="dc" style="left:340.0px;top:126.3px;width:26.6px">35.3</div>
<div class="dc" style="left:366.6px;top:126.3px;width:26.6px">33.2</div>
<div class="dc" style="left:393.2px;top:126.3px;width:26.6px">49.6</div>
<div class="dc" style="left:419.8px;top:126.3px;width:26.6px">39.3</div>
<div class="dc" style="left:446.4px;top:126.3px;width:26.6px">50.5</div>
<div class="dc" style="left:473.0px;top:126.3px;width:26.6px">25.8</div>
<div class="dc" style="left:499.6px;top:126.3px;width:26.6px">34.6</div>
<div class="dc" style="left:526.2px;top:126.3px;width:26.6px">52.8</div>
<div class="dc" style="left:552.8px;top:126.3px;width:26.6px">38.9</div>
<div class="dc" style="left:579.4px;top:126.3px;width:26.6px">13.2</div>
<div class="dc" style="left:606.0px;top:126.3px;width:26.6px">25.9</div>
<div class="dc" style="left:632.6px;top:126.3px;width:26.6px">40.8</div>
<div class="dc" style="left:659.2px;top:126.3px;width:26.6px">28.1</div>
<div class="dc" style="left:685.8px;top:126.3px;width:26.6px">26.3</div>
<div class="dc" style="left:712.4px;top:126.3px;width:26.6px">29.3</div>
<div class="dc" style="left:765.6px;top:126.3px;width:26.6px">35.7</div>
<div class="dc" style="left:792.2px;top:126.3px;width:26.6px">35.4</div>
<div class="dc" style="left:818.8px;top:126.3px;width:26.6px">43</div>
<div class="dc" style="left:845.4px;top:126.3px;width:26.6px">39.1</div>
<div class="dc" style="left:872.0px;top:126.3px;width:26.6px">31.8</div>
<div class="dc" style="left:898.6px;top:126.3px;width:26.6px">35.5</div>
<div class="dc" style="left:925.2px;top:126.3px;width:26.6px">46.2</div>
<div class="dc" style="left:951.8px;top:126.3px;width:26.6px">39.1</div>
<div class="dc" style="left:978.4px;top:126.3px;width:26.6px">31.5</div>
<div class="dc" style="left:1005.0px;top:126.3px;width:26.6px">38.6</div>
<div class="dc" style="left:1031.6px;top:126.3px;width:26.6px">46.8</div>
<div class="dc" style="left:1058.2px;top:126.3px;width:26.6px">31.1</div>
<div class="dc" style="left:1084.8px;top:126.3px;width:26.6px">33.3</div>
<svg class="a" style="left:3.9px;top:144.7px" width="9" height="9"><circle cx="4.5" cy="4.5" r="4" fill="none" stroke="#bdbdbd" stroke-width="0.8"/><path d="M3 3 L6 6 M6 3.8 L6 6 L3.8 6" stroke="#aaa" stroke-width="0.7" fill="none"/></svg>
<div class="rn" style="left:16.0px;top:142.9px">盘州</div>
<div class="rn sid" style="left:54.5px;top:142.9px">56793</div>
<div class="dc" style="left:100.6px;top:142.9px;width:26.6px">40.7</div>
<div class="dc" style="left:127.2px;top:142.9px;width:26.6px">55.5</div>
<div class="dc" style="left:153.8px;top:142.9px;width:26.6px">42.7</div>
<div class="dc" style="left:180.4px;top:142.9px;width:26.6px">26</div>
<div class="dc" style="left:207.0px;top:142.9px;width:26.6px">43.7</div>
<div class="dc" style="left:233.6px;top:142.9px;width:26.6px">37.5</div>
<div class="dc" style="left:260.2px;top:142.9px;width:26.6px">40.5</div>
<div class="dc" style="left:286.8px;top:142.9px;width:26.6px">40.7</div>
<div class="dc" style="left:313.4px;top:142.9px;width:26.6px">49.9</div>
<div class="dc" style="left:340.0px;top:142.9px;width:26.6px">61.5</div>
<div class="dc" style="left:366.6px;top:142.9px;width:26.6px">26.9</div>
<div class="dc" style="left:393.2px;top:142.9px;width:26.6px">36.6</div>
<div class="dc" style="left:419.8px;top:142.9px;width:26.6px">58</div>
<div class="dc" style="left:446.4px;top:142.9px;width:26.6px">60.5</div>
<div class="dc" style="left:473.0px;top:142.9px;width:26.6px">65.2</div>
<div class="dc" style="left:499.6px;top:142.9px;width:26.6px">51.7</div>
<div class="dc" style="left:526.2px;top:142.9px;width:26.6px">42.7</div>
<div class="dc" style="left:552.8px;top:142.9px;width:26.6px">27.2</div>
<div class="dc" style="left:606.0px;top:142.9px;width:26.6px">31</div>
<div class="dc" style="left:632.6px;top:142.9px;width:26.6px">46</div>
<div class="dc" style="left:659.2px;top:142.9px;width:26.6px">40.3</div>
<div class="dc" style="left:685.8px;top:142.9px;width:26.6px">14.6</div>
<div class="dc" style="left:712.4px;top:142.9px;width:26.6px">25.2</div>
<div class="dc" style="left:739.0px;top:142.9px;width:26.6px">33.2</div>
<div class="dc" style="left:765.6px;top:142.9px;width:26.6px">36.8</div>
<div class="dc" style="left:792.2px;top:142.9px;width:26.6px">43.6</div>
<div class="dc" style="left:818.8px;top:142.9px;width:26.6px">29.6</div>
<div class="dc" style="left:845.4px;top:142.9px;width:26.6px">45</div>
<div class="dc" style="left:872.0px;top:142.9px;width:26.6px">42.2</div>
<div class="dc" style="left:898.6px;top:142.9px;width:26.6px">56.5</div>
<div class="dc" style="left:925.2px;top:142.9px;width:26.6px">28.1</div>
<div class="dc" style="left:951.8px;top:142.9px;width:26.6px">32.5</div>
<div class="dc" style="left:1005.0px;top:142.9px;width:26.6px">30.2</div>
<div class="dc" style="left:1031.6px;top:142.9px;width:26.6px">18.5</div>
<div class="dc" style="left:1058.2px;top:142.9px;width:26.6px">35.8</div>
<div class="dc" style="left:1084.8px;top:142.9px;width:26.6px">33.8</div>
<svg class="a" style="left:3.9px;top:161.2px" width="9" height="9"><circle cx="4.5" cy="4.5" r="4" fill="none" stroke="#bdbdbd" stroke-width="0.8"/><path d="M3 3 L6 6 M6 3.8 L6 6 L3.8 6" stroke="#aaa" stroke-width="0.7" fill="none"/></svg>
<div class="rn" style="left:16.0px;top:159.4px">桐梓</div>
<div class="rn sid" style="left:54.5px;top:159.4px">57606</div>
<div class="dc" style="left:100.6px;top:159.4px;width:26.6px">40.1</div>
<div class="dc" style="left:127.2px;top:159.4px;width:26.6px">51.3</div>
<div class="dc" style="left:153.8px;top:159.4px;width:26.6px">17.2</div>
<div class="dc" style="left:180.4px;top:159.4px;width:26.6px">28.2</div>
<div class="dc" style="left:207.0px;top:159.4px;width:26.6px">33.2</div>
<div class="dc" style="left:233.6px;top:159.4px;width:26.6px">41.1</div>
<div class="dc" style="left:260.2px;top:159.4px;width:26.6px">27.6</div>
<div class="dc" style="left:286.8px;top:159.4px;width:26.6px">40.5</div>
<div class="dc" style="left:313.4px;top:159.4px;width:26.6px">9.8</div>
<div class="dc" style="left:340.0px;top:159.4px;width:26.6px">33.1</div>
<div class="dc" style="left:366.6px;top:159.4px;width:26.6px">36.4</div>
<div class="dc" style="left:393.2px;top:159.4px;width:26.6px">31.8</div>
<div class="dc" style="left:419.8px;top:159.4px;width:26.6px">24.2</div>
<div class="dc" style="left:446.4px;top:159.4px;width:26.6px">39.4</div>
<div class="dc" style="left:473.0px;top:159.4px;width:26.6px">25.1</div>
<div class="dc" style="left:526.2px;top:159.4px;width:26.6px">29.3</div>
<div class="dc" style="left:552.8px;top:159.4px;width:26.6px">31.2</div>
<div class="dc" style="left:579.4px;top:159.4px;width:26.6px">23.6</div>
<div class="dc" style="left:632.6px;top:159.4px;width:26.6px">18.2</div>
<div class="dc" style="left:659.2px;top:159.4px;width:26.6px">41.9</div>
<div class="dc" style="left:685.8px;top:159.4px;width:26.6px">55</div>
<div class="dc" style="left:712.4px;top:159.4px;width:26.6px">16.9</div>
<div class="dc" style="left:739.0px;top:159.4px;width:26.6px">50.8</div>
<div class="dc" style="left:765.6px;top:159.4px;width:26.6px">30</div>
<div class="dc" style="left:792.2px;top:159.4px;width:26.6px">20.3</div>
<div class="dc" style="left:818.8px;top:159.4px;width:26.6px">17.1</div>
<div class="dc" style="left:872.0px;top:159.4px;width:26.6px">29.5</div>
<div class="dc" style="left:898.6px;top:159.4px;width:26.6px">17.8</div>
<div class="dc" style="left:925.2px;top:159.4px;width:26.6px">17.4</div>
<div class="dc" style="left:951.8px;top:159.4px;width:26.6px">29.8</div>
<div class="dc" style="left:978.4px;top:159.4px;width:26.6px">39.2</div>
<div class="dc" style="left:1005.0px;top:159.4px;width:26.6px">29.3</div>
<div class="dc" style="left:1031.6px;top:159.4px;width:26.6px">14.1</div>
<div class="dc" style="left:1058.2px;top:159.4px;width:26.6px">42.1</div>
<div class="pill" style="left:4.2px;top:4.2px;width:74.8px;height:17.0px"></div><div class="rn" style="left:8.7px;top:5.4px;line-height:17.0px">1小时降水量(mm)</div><div class="pill" style="left:101.2px;top:3.5px;width:45.4px;height:17.0px"></div><div class="rn" style="left:105.7px;top:4.7px;line-height:17.0px">年份</div><svg class="a" style="left:128.0px;top:7.0px" width="16" height="10"><path d="M1 6.5 L3.5 3.5 L6 6.5 Z" fill="#777"/><circle cx="12" cy="3.3" r="2.3" fill="none" stroke="#888" stroke-width="1"/><line x1="12" y1="5.6" x2="12" y2="9.5" stroke="#888" stroke-width="1"/></svg><div class="pill" style="left:4.2px;top:42.3px;width:45.4px;height:16.4px"></div><div class="rn" style="left:8.7px;top:43.5px;line-height:16.4px">站名</div><svg class="a" style="left:31.0px;top:45.8px" width="16" height="10"><path d="M1 6.5 L3.5 3.5 L6 6.5 Z" fill="#777"/><circle cx="12" cy="3.3" r="2.3" fill="none" stroke="#888" stroke-width="1"/><line x1="12" y1="5.6" x2="12" y2="9.5" stroke="#888" stroke-width="1"/></svg><div class="pill" style="left:52.7px;top:42.3px;width:45.7px;height:16.4px"></div><div class="rn" style="left:57.2px;top:43.5px;line-height:16.4px">站号</div><svg class="a" style="left:80.0px;top:45.8px" width="16" height="10"><path d="M1 6.5 L3.5 3.5 L6 6.5 Z" fill="#777"/><circle cx="12" cy="3.3" r="2.3" fill="none" stroke="#888" stroke-width="1"/><line x1="12" y1="5.6" x2="12" y2="9.5" stroke="#888" stroke-width="1"/></svg>
</div>
<div class="a" style="left:1238px;top:538.5px;width:40px;height:32px;background:#fff;border-radius:6px 0 0 6px;box-shadow:0 0 6px rgba(0,0,0,0.18)"></div>
<svg class="a" style="left:1244px;top:545px" width="19" height="19"><circle cx="9.5" cy="9.5" r="7.6" fill="#fff" stroke="#2f6fe0" stroke-width="1.1"/><path d="M4 4.5 A7.6 7.6 0 0 1 16.5 6" stroke="#2f6fe0" stroke-width="2.2" fill="none"/><path d="M15 14.5 A7.6 7.6 0 0 1 2.5 13" stroke="#2f6fe0" stroke-width="2.2" fill="none"/><path d="M5 11.5 L7.5 8.5 L9.5 11 L12 8 L14.5 10.5" stroke="#2f6fe0" stroke-width="1.7" fill="none" stroke-linejoin="round"/></svg>
</body></html>
